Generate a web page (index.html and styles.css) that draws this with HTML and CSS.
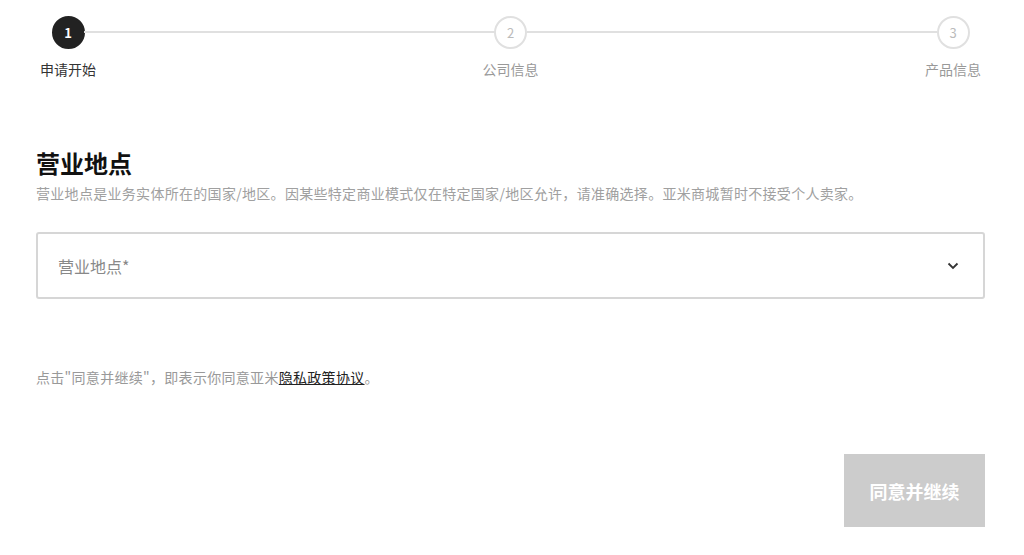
FILE: index.html
```html
<!DOCTYPE html>
<html lang="zh-CN">
<head>
    <meta charset="UTF-8">
    <meta name="viewport" content="width=device-width, initial-scale=1.0">
    <title>营业地点</title>
    <link rel="stylesheet" href="styles.css">
</head>
<body>
    <div class="page">
        <div class="stepper">
            <div class="step active">
                <div class="step-dot">1</div>
                <div class="step-label">申请开始</div>
            </div>
            <div class="step-line"></div>
            <div class="step">
                <div class="step-dot">2</div>
                <div class="step-label">公司信息</div>
            </div>
            <div class="step-line"></div>
            <div class="step">
                <div class="step-dot">3</div>
                <div class="step-label">产品信息</div>
            </div>
        </div>

        <h2 class="title">营业地点</h2>
        <p class="desc">营业地点是业务实体所在的国家/地区。因某些特定商业模式仅在特定国家/地区允许，请准确选择。亚米商城暂时不接受个人卖家。</p>

        <div class="select">
            <span class="select-placeholder">营业地点*</span>
            <svg class="chevron" width="12" height="8" viewBox="0 0 12 8">
                <path d="M1.5 1.5 L6 6 L10.5 1.5" fill="none" stroke="#333" stroke-width="1.8"/>
            </svg>
        </div>

        <p class="agree">点击"同意并继续"，即表示你同意亚米<a href="#">隐私政策协议</a>。</p>

        <div class="actions">
            <button class="btn" disabled>同意并继续</button>
        </div>
    </div>
</body>
</html>
```

FILE: styles.css
```css
* {
    box-sizing: border-box;
    font-family: "Noto Sans CJK SC", "Noto Sans", sans-serif;
}

body {
    margin: 0;
    background: white;
}

.page {
    padding: 16px 39px 0 36px;
}

.stepper {
    display: flex;
    align-items: flex-start;
}

.step {
    width: 64px;
    display: flex;
    flex-direction: column;
    align-items: center;
}

.step-dot {
    width: 33px;
    height: 33px;
    border-radius: 50%;
    border: 2px solid #e0e0e0;
    color: #bbb;
    font-size: 13px;
    display: flex;
    align-items: center;
    justify-content: center;
}

.step.active .step-dot {
    background: #222;
    border-color: #222;
    color: white;
    font-weight: 700;
}

.step-label {
    margin-top: 11px;
    font-size: 14px;
    line-height: 18px;
    color: #999;
    white-space: nowrap;
}

.step.active .step-label {
    color: #333;
}

.step-line {
    flex: 1;
    height: 2px;
    background: #e0e0e0;
    margin: 15px -16px 0 -16px;
}

.title {
    margin: 69px 0 4px 0;
    font-size: 24px;
    line-height: 32px;
    font-weight: 700;
    color: #111;
}

.desc {
    margin: 0;
    font-size: 14px;
    line-height: 20px;
    color: #a0a0a0;
    letter-spacing: 0.3px;
}

.select {
    margin-top: 29px;
    height: 67px;
    border: 2px solid #d6d6d6;
    border-radius: 3px;
    display: flex;
    align-items: center;
    justify-content: space-between;
    padding: 0 24px 0 20px;
}

.select-placeholder {
    font-size: 16px;
    color: #888;
}

.agree {
    margin: 68px 0 0 0;
    font-size: 14px;
    line-height: 20px;
    color: #999;
    letter-spacing: 0.3px;
}

.agree a {
    color: #222;
    text-decoration: underline;
}

.actions {
    display: flex;
    justify-content: flex-end;
    margin-top: 67px;
}

.btn {
    width: 141px;
    height: 73px;
    border: none;
    background: #cccccc;
    color: white;
    font-size: 18px;
    font-weight: 700;
}
```
